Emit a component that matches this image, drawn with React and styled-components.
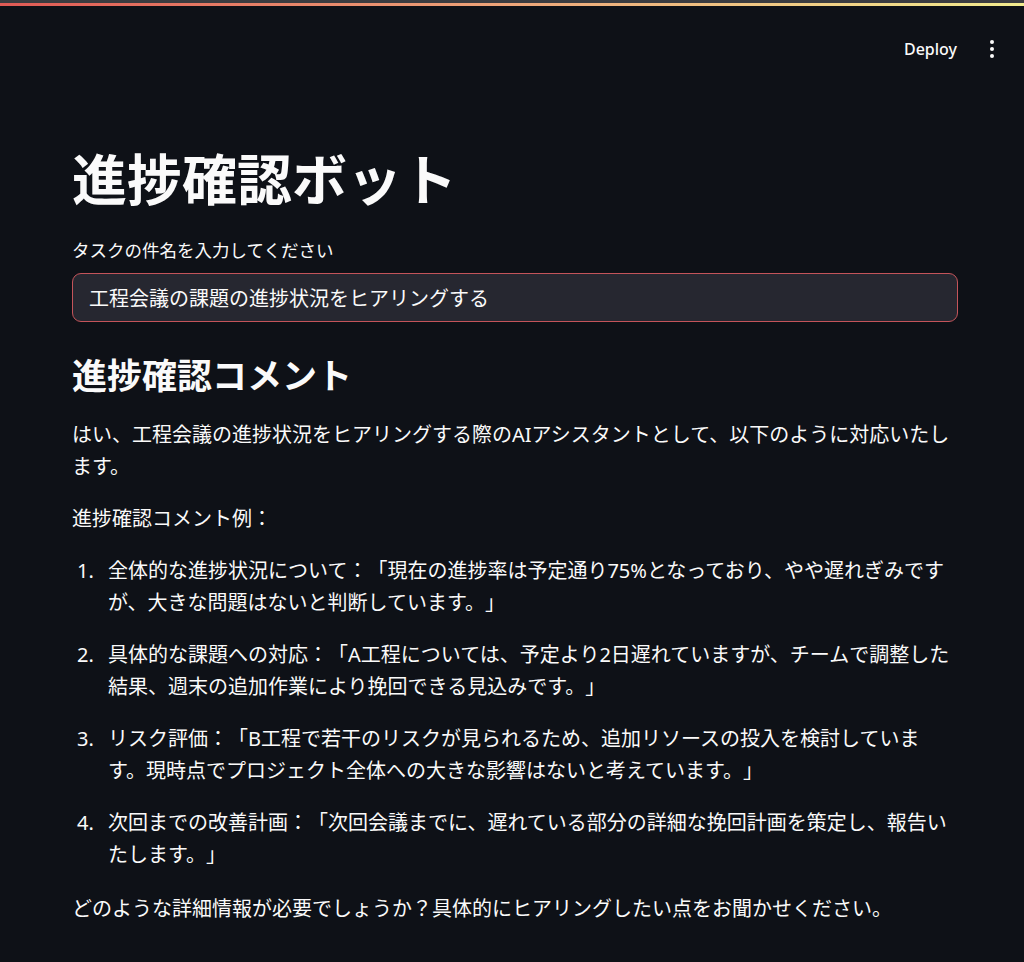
import React from "react";
import styled, { createGlobalStyle } from "styled-components";

const GlobalStyle = createGlobalStyle`
  html, body {
    margin: 0;
    padding: 0;
    background: #0e1117;
  }
  body {
    color: #fafafa;
    font-family: "Noto Sans", "Noto Sans CJK JP", sans-serif;
    -webkit-font-smoothing: antialiased;
    text-spacing-trim: space-all;
  }
  * { box-sizing: border-box; }
`;

const Page = styled.div`
  min-height: 962px;
  background: #0e1117;
`;

const Chrome = styled.div`
  height: 3px;
  background: #3b3c40;
`;

const Decoration = styled.div`
  height: 3px;
  background: linear-gradient(90deg, #e05a55 0%, #eea67a 50%, #f3ec8e 100%);
`;

const Header = styled.header`
  height: 86px;
  display: flex;
  align-items: center;
  justify-content: flex-end;
  padding-right: 20px;
  gap: 23px;
`;

const DeployButton = styled.button`
  background: transparent;
  border: none;
  color: #fafafa;
  font-family: "Noto Sans", sans-serif;
  font-size: 16px;
  font-weight: 500;
  padding: 6px 0;
  cursor: pointer;
`;

const Kebab = styled.button`
  background: transparent;
  border: none;
  padding: 0;
  width: 24px;
  height: 24px;
  display: flex;
  flex-direction: column;
  align-items: center;
  justify-content: center;
  gap: 3px;
  cursor: pointer;
`;

const Dot = styled.span`
  width: 4px;
  height: 4px;
  border-radius: 50%;
  background: #fafafa;
`;

const Main = styled.main`
  padding: 54px 66px 40px 72px;
`;

const Title = styled.h1`
  margin: 0;
  font-size: 55px;
  line-height: 1.2;
  font-weight: 700;
  letter-spacing: 0;
`;

const Field = styled.div`
  margin-top: 24px;
  display: flex;
  flex-direction: column;
  gap: 9px;
`;

const Label = styled.label`
  font-size: 17.5px;
  line-height: 28px;
  color: #fafafa;
`;

const Input = styled.input`
  height: 49px;
  width: 100%;
  background: #262730;
  border: 1px solid #c4545a;
  border-radius: 9px;
  color: #fafafa;
  font-family: "Noto Sans", "Noto Sans CJK JP", sans-serif;
  font-size: 20px;
  padding: 0 16px;
  outline: none;
`;

const Subtitle = styled.h2`
  margin: 33px 0 22px;
  font-size: 35px;
  line-height: 1.2;
  font-weight: 700;
`;

const Paragraph = styled.p`
  margin: 0 0 20px;
  font-size: 20px;
  line-height: 32px;
`;

const List = styled.ol`
  margin: 0 0 22px;
  padding: 0;
  list-style: none;
  display: flex;
  flex-direction: column;
  gap: 20px;
`;

const Item = styled.li`
  display: grid;
  grid-template-columns: 36px minmax(0, 846px);
  font-size: 20px;
  line-height: 32px;
`;

const Marker = styled.span`
  padding-left: 5px;
  font-family: "Noto Sans", sans-serif;
`;

const ItemText = styled.span`
  text-spacing-trim: space-all;
`;

const items = [
  "全体的な進捗状況について：「現在の進捗率は予定通り75%となっており、やや遅れぎみですが、大きな問題はないと判断しています。」",
  "具体的な課題への対応：「A工程については、予定より2日遅れていますが、チームで調整した結果、週末の追加作業により挽回できる見込みです。」",
  "リスク評価：「B工程で若干のリスクが見られるため、追加リソースの投入を検討しています。現時点でプロジェクト全体への大きな影響はないと考えています。」",
  "次回までの改善計画：「次回会議までに、遅れている部分の詳細な挽回計画を策定し、報告いたします。」",
];

export default function App() {
  return (
    <Page>
      <GlobalStyle />
      <Chrome />
      <Decoration />
      <Header>
        <DeployButton>Deploy</DeployButton>
        <Kebab aria-label="menu">
          <Dot />
          <Dot />
          <Dot />
        </Kebab>
      </Header>
      <Main>
        <Title>進捗確認ボット</Title>
        <Field>
          <Label>タスクの件名を入力してください</Label>
          <Input defaultValue="工程会議の課題の進捗状況をヒアリングする" />
        </Field>
        <Subtitle>進捗確認コメント</Subtitle>
        <Paragraph>
          はい、工程会議の進捗状況をヒアリングする際のAIアシスタントとして、以下のように対応いたします。
        </Paragraph>
        <Paragraph>進捗確認コメント例：</Paragraph>
        <List>
          {items.map((t, i) => (
            <Item key={i}>
              <Marker>{i + 1}.</Marker>
              <ItemText>{t}</ItemText>
            </Item>
          ))}
        </List>
        <Paragraph>
          どのような詳細情報が必要でしょうか？具体的にヒアリングしたい点をお聞かせください。
        </Paragraph>
      </Main>
    </Page>
  );
}
